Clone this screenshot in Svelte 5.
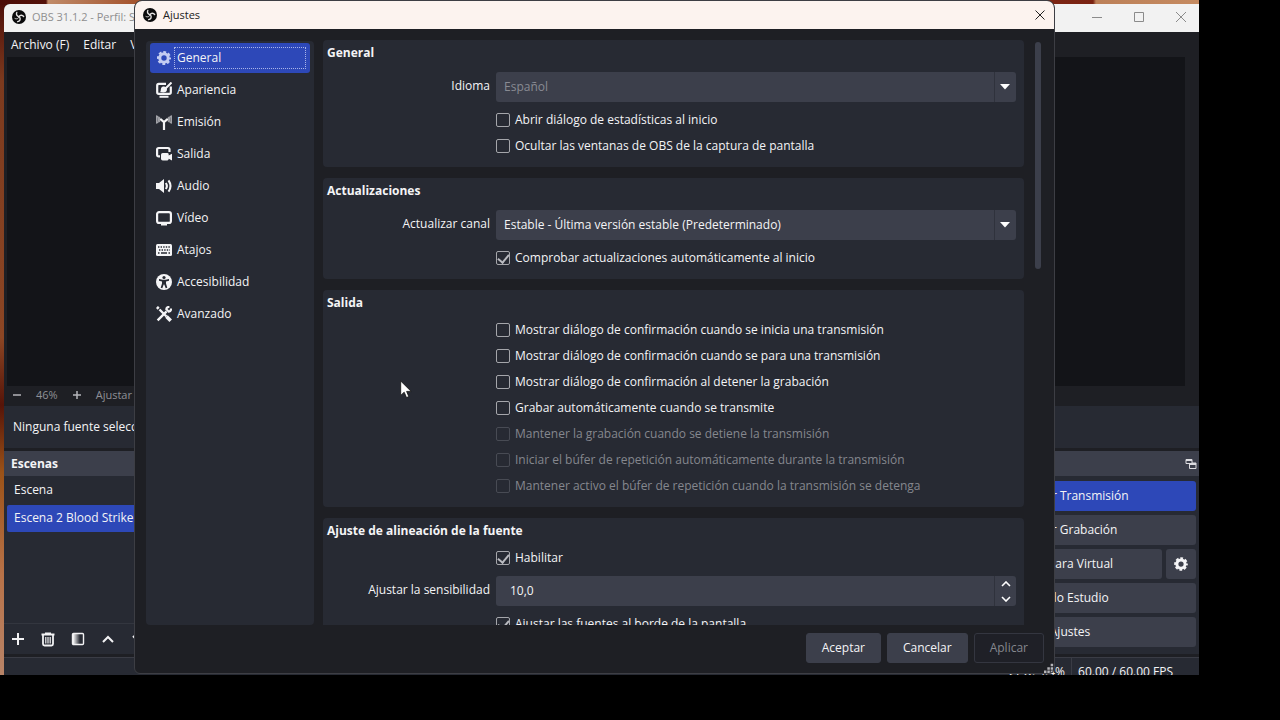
<script>
  const menus = ['Archivo (F)', 'Editar', 'Ver'];
  const pages = [
    ['general', 'General'],
    ['appearance', 'Apariencia'],
    ['stream', 'Emisión'],
    ['output', 'Salida'],
    ['audio', 'Audio'],
    ['video', 'Vídeo'],
    ['hotkeys', 'Atajos'],
    ['access', 'Accesibilidad'],
    ['advanced', 'Avanzado'],
  ];
  const groups = [
    {
      title: 'General',
      rows: [
        { kind: 'select', id: 'lang', label: 'Idioma', value: 'Español', dim: true },
        { kind: 'check', label: 'Abrir diálogo de estadísticas al inicio' },
        { kind: 'check', label: 'Ocultar las ventanas de OBS de la captura de pantalla' },
      ],
    },
    {
      title: 'Actualizaciones',
      rows: [
        { kind: 'select', id: 'channel', label: 'Actualizar canal', value: 'Estable - Última versión estable (Predeterminado)' },
        { kind: 'check', label: 'Comprobar actualizaciones automáticamente al inicio', on: true },
      ],
    },
    {
      title: 'Salida',
      rows: [
        { kind: 'check', label: 'Mostrar diálogo de confirmación cuando se inicia una transmisión' },
        { kind: 'check', label: 'Mostrar diálogo de confirmación cuando se para una transmisión' },
        { kind: 'check', label: 'Mostrar diálogo de confirmación al detener la grabación' },
        { kind: 'check', label: 'Grabar automáticamente cuando se transmite' },
        { kind: 'check', label: 'Mantener la grabación cuando se detiene la transmisión', dim: true },
        { kind: 'check', label: 'Iniciar el búfer de repetición automáticamente durante la transmisión', dim: true },
        { kind: 'check', label: 'Mantener activo el búfer de repetición cuando la transmisión se detenga', dim: true },
      ],
    },
    {
      title: 'Ajuste de alineación de la fuente',
      rows: [
        { kind: 'check', label: 'Habilitar', on: true },
        { kind: 'spin', id: 'sens', label: 'Ajustar la sensibilidad', value: '10,0' },
        { kind: 'check', label: 'Ajustar las fuentes al borde de la pantalla', on: true },
      ],
    },
  ];
</script>

{#snippet logo()}
  <svg class="logo" viewBox="0 0 24 24" aria-hidden="true">
    <circle cx="12" cy="12" r="12" fill="#0b0b0c" />
    <g fill="none" stroke="#e4e2e2" stroke-width="2.4" stroke-linecap="round">
      <path d="M8.2 4.2C6.6 7.6 8.6 11 12 11.4" />
      <path d="M20 11.2C17.8 8.2 13.8 8.4 12 11.6" />
      <path d="M9.6 20C13.4 19.6 15.2 16 13.2 12.6" />
      <path d="M5 14.6C7.6 16.2 10.6 15.4 12 12.4" stroke-width="1.4" />
    </g>
  </svg>
{/snippet}

{#snippet gear()}
  <g fill="none" stroke="currentColor">
    <circle cx="8" cy="8" r="4.700" stroke-width="3.400" />
    <circle cx="8" cy="8" r="6.600" stroke-width="2.400" stroke-dasharray="3.100 2.084" stroke-dashoffset="1.550" />
  </g>
{/snippet}

{#snippet pageIcon(name)}
  <svg class="icon" viewBox="0 0 16 16" aria-hidden="true" fill="none" stroke="currentColor">
    {#if name === 'general'}
      <g transform="translate(.8 .8) scale(.9)">{@render gear()}</g>
    {:else if name === 'appearance'}
      <path stroke-width="2.200" d="M10 1.800H2.800Q1.200 1.800 1.200 3.400v6.800q0 1.600 1.600 1.600h10.400q1.600 0 1.600-1.600V4.500" />
      <path stroke-width="2" d="M3.500 14.800h9M15.500.500 9.500 6.500" />
      <path fill="currentColor" stroke="none" d="M4 10c1-.6.600-2.300 1-3.600C5.700 4.300 8.600 3.900 10.200 5.600c1.700 2 .6 5-2.700 5z" />
    {:else if name === 'stream'}
      <path stroke-width="2.200" d="M8 7.500V16M4.200 4.800 8 8l3.800-3.200" />
      <path stroke-width="2.200" opacity=".6" d="M1.500 1.800a6 6 0 0 0 0 7.400M14.500 1.800a6 6 0 0 1 0 7.400M3.600 3a4 4 0 0 0 0 5M12.400 3a4 4 0 0 1 0 5" />
    {:else if name === 'output'}
      <path stroke-width="2.200" d="M13.500 6V3.600Q13.500 2 12 2H2.700Q1.100 2 1.100 3.600v5.200q0 1.600 1.600 1.600H4" />
      <path fill="currentColor" stroke="none" d="M6.700 7h4.600q1.400 0 1.400 1.400v1.200L16 7.800v6.700l-3.300-1.700q0 1.700-1.400 1.700H6.700Q5 14.500 5 12.800V8.700Q5 7 6.700 7z" />
    {:else if name === 'audio'}
      <path fill="currentColor" stroke="none" d="M0 5h3l5-4v14l-5-4H0z" />
      <path stroke-width="2.100" d="M9.800 5q2.200 3 0 6M12.500 2.300q4 5.700 0 11.400" />
    {:else if name === 'video'}
      <rect x="1.100" y="2.100" width="13.800" height="10.800" rx="2" stroke-width="2.200" />
      <path stroke-width="2" d="M5 14.500h6" />
    {:else if name === 'hotkeys'}
      <rect x="0" y="2" width="16" height="12" rx="1.500" fill="currentColor" stroke="none" />
      <path stroke="#272a33" stroke-width="1.300" stroke-dasharray="1.400 1.200" d="M2 5h12M3 8h11" />
      <path stroke="#272a33" stroke-width="1.300" d="M2 11h1.500M5 11h6M12.500 11H14" />
    {:else if name === 'access'}
      <circle cx="8" cy="8" r="8" fill="currentColor" stroke="none" />
      <circle cx="8" cy="3.500" r="1.600" fill="#272a33" stroke="none" />
      <path fill="#272a33" stroke="none" d="M3 5 6.500 5.800h3L13 5v1.700l-3 .9v2l1.300 4.200-1.600.5-1.400-3.800h-.6l-1.400 3.800-1.600-.5L6 9.600v-2l-3-.9z" />
    {:else}
      <path stroke-width="2.400" d="m3.500 3.500 7 7M.8 2.800l2-2M1.600 14.400l9-9" />
      <path stroke-width="3.600" d="m10.500 10.500 4.200 4.200" />
      <path stroke-width="2.200" d="M13.400.9Q10.500.9 10.300 3.200L12.800 5.700Q15.100 5.500 15.100 2.600" />
    {/if}
  </svg>
{/snippet}

<div class="screen">
  <div class="desktop">
    <section class="main" aria-label="OBS">
      <header class="mainbar">
        {@render logo()}
        <span>OBS 31.1.2 - Perfil: Sin</span>
        <div class="winbtns">
          <button aria-label="Minimizar"><svg viewBox="0 0 12 12"><path d="M1 6.500h10" /></svg></button>
          <button aria-label="Maximizar"><svg viewBox="0 0 12 12"><path d="M1.500 1.500h9v9h-9z" /></svg></button>
          <button aria-label="Cerrar"><svg viewBox="0 0 12 12"><path d="m1 1 10 10M11 1 1 11" /></svg></button>
        </div>
      </header>
      <nav class="menus">
        {#each menus as m}<button>{m}</button>{/each}
      </nav>
      <div class="preview"></div>
      <div class="zoombar">
        <button aria-label="Alejar"><svg viewBox="0 0 8 8"><path d="M0 4h8" /></svg></button>
        <span>46%</span>
        <button aria-label="Acercar"><svg viewBox="0 0 8 8"><path d="M0 4h8M4 0v8" /></svg></button>
        <span>Ajustar a</span>
      </div>
      <div class="context">Ninguna fuente seleccionada</div>
      <div class="docks">
        <section class="scenes">
          <h2>Escenas</h2>
          <ul>
            <li>Escena</li>
            <li class="current">Escena 2 Blood Strike</li>
          </ul>
          <div class="tools">
            <button aria-label="Añadir"><svg viewBox="0 0 16 16"><path d="M8 2v12M2 8h12" /></svg></button>
            <button aria-label="Eliminar"><svg viewBox="0 0 16 16"><path stroke-width="1.800" d="M1.500 3.500h13M5 2.500h6M3 4.500V13q0 1.500 1.500 1.500h7q1.500 0 1.500-1.500V4.500" /><path stroke-width="1.200" d="M5.800 6v6.500M8 6v6.500M10.200 6v6.500" /></svg></button>
            <button aria-label="Filtros"><svg viewBox="0 0 16 16"><defs><linearGradient id="fade"><stop offset="0" stop-color="#fff" /><stop offset="1" stop-color="#fff" stop-opacity="0" /></linearGradient></defs><rect x="3" y="3" width="7" height="10" fill="url(#fade)" stroke="none" /><rect x="2.500" y="2.500" width="11" height="11" rx="1" stroke-width="1.400" /></svg></button>
            <button aria-label="Subir"><svg viewBox="0 0 16 16"><path d="m3 11 5-5 5 5" /></svg></button>
            <button aria-label="Bajar"><svg viewBox="0 0 16 16"><path d="m3 5 5 5 5-5" /></svg></button>
          </div>
        </section>
        <section class="controls" aria-label="Controles">
          <div class="dockhead">
            <svg viewBox="0 0 12 12" aria-hidden="true"><path d="M1 1.500h6v4H1zM4.500 6v4.500h6.500V5H7" /><path stroke-width="2" d="M1 2h6M4.500 6H11" /></svg>
          </div>
          <div class="stack">
            <button class="go">Detener Transmisión</button>
            <button>Iniciar Grabación</button>
            <div class="pair">
              <button>Iniciar Cámara Virtual</button>
              <button class="cog" aria-label="Configurar cámara"><svg viewBox="0 0 16 16">{@render gear()}</svg></button>
            </div>
            <button>Modo Estudio</button>
            <button>Ajustes</button>
          </div>
        </section>
      </div>
      <footer class="status">
        <span>CPU: 4.4%</span>
        <span class="fps">60.00 / 60.00 FPS</span>
      </footer>
    </section>

    <div class="dialog" role="dialog" aria-label="Ajustes">
      <header class="dlgbar">
        {@render logo()}
        <span>Ajustes</span>
        <button aria-label="Cerrar"><svg viewBox="0 0 12 12"><path d="m1.500 1.500 9 9M10.500 1.500l-9 9" /></svg></button>
      </header>
      <div class="body">
        <nav class="side">
          {#each pages as [icon, label], i}
            <button class:active={i === 0}>{@render pageIcon(icon)}<span>{label}</span></button>
          {/each}
        </nav>
        <div class="scroller">
          {#each groups as g}
            <section class="group">
              <h3>{g.title}</h3>
              {#each g.rows as r}
                {#if r.kind === 'check'}
                  <div class="check">
                    <label class:dim={r.dim}><input type="checkbox" checked={r.on} disabled={r.dim} />{r.label}</label>
                  </div>
                {:else}
                  <div class="field">
                    <label for={r.id}>{r.label}</label>
                    {#if r.kind === 'select'}
                      <div class="combo">
                        <select id={r.id} class:dim={r.dim} disabled={r.dim}><option>{r.value}</option></select>
                        <svg viewBox="0 0 10 6" aria-hidden="true"><path d="M0 0h10L5 5.500z" /></svg>
                      </div>
                    {:else}
                      <div class="spin">
                        <input id={r.id} type="text" inputmode="decimal" value={r.value} />
                        <div class="steps">
                          <button aria-label="Aumentar"><svg viewBox="0 0 10 6"><path d="m1 5 4-4 4 4" /></svg></button>
                          <button aria-label="Disminuir"><svg viewBox="0 0 10 6"><path d="m1 1 4 4 4-4" /></svg></button>
                        </div>
                      </div>
                    {/if}
                  </div>
                {/if}
              {/each}
            </section>
          {/each}
        </div>
        <div class="track"><div class="thumb"></div></div>
      </div>
      <footer class="actions">
        <button>Aceptar</button>
        <button>Cancelar</button>
        <button disabled>Aplicar</button>
      </footer>
      <svg class="grip" viewBox="0 0 12 12" aria-hidden="true"><path d="M0 9h3v3H0zM4 9h3v3H4zM8 9h3v3H8zM4 5h3v3H4zM8 5h3v3H8zM8 1h3v3H8z" /></svg>
    </div>

    <svg class="pointer" viewBox="0 0 12 19" aria-hidden="true"><path d="M.7 1v14.400l3.500-3.200 2.300 5.400 2.300-1-2.200-5.200h4.600z" /></svg>
  </div>
</div>

<style>
  :global(body) { margin: 0; background: #000; }
  .screen {
    box-sizing: border-box;
    height: 100vh;
    padding: 0 81px 45px 0;
    background: #000;
    color: #f4f4f6;
    font: 12px/16px "Open Sans", "Noto Sans", sans-serif;
  }
  .screen :global(*) { box-sizing: border-box; }
  button, input, select { font: inherit; color: inherit; margin: 0; padding: 0; border: 0; background: none; opacity: 1; }
  h2, h3, ul { margin: 0; padding: 0; font-size: inherit; list-style: none; }
  svg { display: block; flex: none; }
  .desktop {
    position: relative;
    height: 100%;
    overflow: hidden;
    background:
      linear-gradient(90deg, #4c0d08, #54120a 46px, #c08b68 48px, #a4542e 134px, #7a2312 1093px, #bc8058 1096px, #c58a60) 0 0 / 100% 5px no-repeat,
      linear-gradient(#4c0d08, #7c3a1e 12%, #8c4624 50%, #561408 60%, #9a5218 70%, #b87248 85%, #b88468);
  }
  .logo { width: 14px; height: 14px; }

  /* main window */
  .main {
    position: absolute;
    inset: 4px 0 0 4px;
    display: flex;
    flex-direction: column;
    overflow: hidden;
    border-radius: 6px 0 0 0;
    background: #1e1f24;
    white-space: nowrap;
  }
  .mainbar { display: flex; align-items: center; gap: 6px; height: 28px; padding: 0 12px 2px 8px; background: #f2f2f2; color: #8f8f8f; font-size: 11px; }
  .winbtns { display: flex; gap: 30px; margin-left: auto; }
  .winbtns svg { width: 12px; height: 12px; fill: none; stroke: #8b8b8b; }
  .menus { display: flex; gap: 14px; height: 25px; padding: 0 7px; }
  .preview { flex: 1; min-height: 0; margin: 0 14px 0 3px; background: #131418; }
  .zoombar { display: flex; align-items: center; gap: 15px; height: 20px; padding: 0 9px 2px; color: #8f9096; font-size: 11px; }
  .zoombar svg { width: 8px; height: 8px; fill: none; stroke: #b4b5b9; stroke-width: 1.5; }
  .context { height: 42px; padding: 5px 9px; background: #272a33; line-height: 32px; }
  .docks { display: flex; justify-content: space-between; height: 203px; margin-top: 3px; background: #272a33; }
  .scenes { display: flex; flex-direction: column; width: 252px; }
  h2, .dockhead { height: 25px; background: #3c3f4b; }
  h2 { padding: 0 7px; line-height: 25px; }
  .scenes ul { flex: 1; padding: 1px 3px; }
  .scenes li { height: 28px; padding: 0 7px; line-height: 26px; }
  .scenes li.current { height: 27px; background: #2d48b8; border-radius: 2px; }
  .tools { display: flex; align-items: center; gap: 14px; height: 31px; padding: 0 6px; border-top: 1px solid #33363f; }
  .tools svg { width: 16px; height: 16px; fill: none; stroke: #f2f2f4; stroke-width: 2; }
  .controls { width: 258px; }
  .dockhead { display: flex; align-items: center; justify-content: flex-end; padding: 0 2px; }
  .dockhead svg { width: 12px; height: 12px; fill: none; stroke: #dcdce0; }
  .stack { display: flex; flex-direction: column; gap: 4px; padding: 5px 3px; }
  .stack button { width: 100%; height: 30px; border-radius: 3px; background: #3c3f4b; }
  .stack .go { background: #2d48b8; }
  .pair { display: flex; gap: 4px; }
  .stack .cog { display: grid; place-items: center; flex: none; width: 30px; }
  .cog svg { width: 14px; height: 14px; }
  .status { display: flex; justify-content: flex-end; height: 18px; margin-top: 3px; padding-right: 20px; border-top: 1px solid #3a3c45; background: #272a33; line-height: 28px; }
  .status span { padding: 0 6px; }
  .status .fps { border-left: 1px solid #3a3c45; }

  /* settings dialog */
  .dialog {
    position: absolute;
    inset: 0 144px 1px 134px;
    display: flex;
    flex-direction: column;
    overflow: hidden;
    border: 1px solid #3d3e44;
    border-radius: 8px 8px 6px 6px;
    background: #1e1f24;
  }
  .dlgbar { display: flex; align-items: center; gap: 6px; height: 28px; padding: 0 8px; background: #fcf3ef; color: #222; font-size: 11px; }
  .dlgbar button { margin-left: auto; }
  .dlgbar svg:not(.logo) { width: 12px; height: 12px; fill: none; stroke: #222; }
  .body { display: flex; flex: 1; min-height: 0; padding: 11px 12px 0 11px; }
  .side { flex: none; width: 168px; padding: 2px 4px; margin-top: 1px; border-radius: 4px; background: #272a33; }
  .side button { display: flex; align-items: center; gap: 2px; width: 160px; height: 30px; margin-bottom: 2px; padding: 0 4px 0 6px; border-radius: 3px; text-align: left; }
  .side span { flex: 1; height: 22px; padding: 0 2px; border: 1px solid transparent; line-height: 20px; }
  .side .active { background: #2d48b8; }
  .side .active span { border: 1px dotted #a9b4e8; }
  .side .active .icon { color: #c3ccf2; }
  .icon { width: 16px; height: 16px; }
  .scroller { display: flex; flex: 1; flex-direction: column; gap: 11px; min-width: 0; margin: 0 11px 0 9px; overflow: hidden; }
  .group { flex: none; padding: 5px 8px 8px 4px; border-radius: 4px; background: #272a33; }
  h3 { margin-bottom: 6px; line-height: 16px; }
  .check { display: flex; align-items: center; height: 26px; padding-left: 169px; }
  .check label { display: flex; align-items: center; gap: 5px; white-space: nowrap; }
  .check input { display: grid; place-items: center; appearance: none; width: 14px; height: 14px; border: 1px solid #a5a6ab; border-radius: 2px; }
  .check input:checked::before { content: ""; width: 5px; height: 9px; margin-bottom: 2px; border: solid #b9babf; border-width: 0 2px 2px 0; transform: rotate(40deg); }
  .check .dim { color: #85878e; }
  .check .dim input { border-color: #484b54; }
  .field { display: grid; grid-template-columns: 163px 1fr; gap: 6px; height: 40px; padding: 5px 0; }
  .field > label { padding-top: 6px; text-align: right; }
  .combo { position: relative; height: 30px; border-radius: 3px; background: linear-gradient(#2f323c, #2f323c) right 21px top 0 / 1px 100% no-repeat #3c3f4b; }
  .combo select { appearance: none; display: block; width: 100%; height: 30px; padding: 0 30px 0 8px; outline: 0; opacity: 1; }
  .combo .dim { color: #898b93; }
  .combo svg { position: absolute; top: 12px; right: 6px; width: 10px; height: 6px; fill: #fff; pointer-events: none; }
  .spin { display: flex; height: 30px; border-radius: 3px; background: #3c3f4b; }
  .spin input { flex: 1; min-width: 0; padding: 0 14px; }
  .steps { display: flex; flex-direction: column; width: 22px; border-left: 1px solid #2f323c; }
  .steps button { display: grid; flex: 1; place-items: center; }
  .steps svg { width: 10px; height: 6px; fill: none; stroke: #fff; stroke-width: 1.6; }
  .track { flex: none; width: 7px; margin-top: 2px; }
  .thumb { width: 6px; height: 39%; border-radius: 3px; background: #3c3f4b; }
  .actions { display: flex; justify-content: flex-end; gap: 6px; height: 48px; padding: 8px 10px 10px; }
  .actions button { padding: 0 15px; border: 1px solid #3c3f4b; border-radius: 3px; background: #3c3f4b; }
  .actions button:disabled { border-color: #343640; background: #1f2027; color: #85878e; }
  .grip { position: absolute; right: 0; bottom: 0; width: 10px; height: 10px; fill: #b5b5b9; }
  .pointer { position: absolute; top: 380px; left: 400px; width: 12px; height: 19px; fill: #fff; stroke: #111; stroke-width: 0.8; }
</style>
